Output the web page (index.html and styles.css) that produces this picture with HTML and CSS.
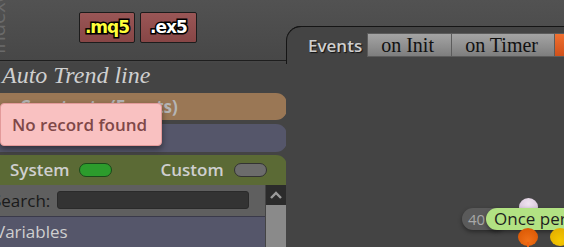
FILE: index.html
```html
<!DOCTYPE html>
<html>
<head>
<meta charset="utf-8">
<link rel="stylesheet" href="styles.css">
</head>
<body>
<div class="app">
  <div class="left">
    <div class="head">
      <div class="vtext">Indexes</div>
      <div class="btns">
        <div class="fbtn mq">.mq5</div>
        <div class="fbtn ex">.ex5</div>
      </div>
    </div>
    <div class="title">Auto Trend line</div>
    <div class="bar tan">Constants (Events)</div>
    <div class="bar slate"></div>
    <div class="bar green">
      <span class="lbl">System</span><span class="tog on"></span>
      <span class="lbl custom">Custom</span><span class="tog"></span>
    </div>
    <div class="lower">
      <div class="list">
        <div class="search"><span>Search:</span><div class="input"></div></div>
        <div class="row">Variables</div>
      </div>
      <div class="scroll">
        <div class="up"><svg width="12" height="8" viewBox="0 0 12 8"><path d="M1 7 L6 2 L11 7" fill="none" stroke="#9a9a9a" stroke-width="2.4"/></svg></div>
        <div class="track"></div>
      </div>
    </div>
    <div class="toast">No record found</div>
  </div>
  <div class="right">
    <div class="canvas">
      <div class="tabs">
        <span class="evlbl">Events</span>
        <span class="tab">on Init</span>
        <span class="tab">on Timer</span>
        <span class="tab orange">on Tick</span>
      </div>
      <div class="node">
        <span class="dot pink"></span>
        <span class="num">40</span>
        <span class="pill">Once per bar</span>
        <span class="dot orange"></span>
        <span class="stem"></span>
        <span class="dot yellow"></span>
      </div>
    </div>
  </div>
</div>
</body>
</html>
```
FILE: styles.css
```css
html, body { margin: 0; padding: 0; }
body { width: 564px; height: 247px; overflow: hidden; background: #444; font-family: "Open Sans", "DejaVu Sans", sans-serif; }
.app { display: flex; width: 564px; height: 247px; background: linear-gradient(#525252, #474747 62px, #444 63px); }
.left { width: 286px; flex: none; position: relative; display: flex; flex-direction: column; overflow: hidden; }
.head { height: 62px; border-bottom: 1px solid #1e1e1e; position: relative; display: flex; justify-content: flex-start; box-sizing: border-box; }
.vtext { position: absolute; left: -13px; top: -4px; width: 22px; height: 58px; overflow: hidden; }
.vtext { writing-mode: vertical-rl; transform: rotate(180deg); color: #6a6a6a; font-size: 20px; line-height: 22px; text-align: left; }
.btns { display: flex; gap: 5px; margin: 12px 0 0 79px; height: 31px; }
.fbtn { box-sizing: border-box; height: 31px; border: 1px solid #1c1c1c; border-radius: 2px; background: linear-gradient(#9a5656, #874646); font-family: "DejaVu Sans", sans-serif; font-weight: bold; font-size: 17px; line-height: 29px; text-align: center; letter-spacing: -1px; -webkit-text-stroke: 3px #000; paint-order: stroke fill; text-shadow: 0 0 1px #000; }
.mq { width: 56px; color: #ffff3a; }
.ex { width: 57px; color: #fff; }
.title { height: 31px; font-family: "Liberation Serif", serif; font-style: italic; font-size: 24px; line-height: 29px; color: #cfcfcf; padding-left: 2px; }
.bar { margin-right: -1px; border-radius: 0 11px 11px 0; box-sizing: border-box; }
.tan { height: 27px; margin-top: 1px; background: #9a7755; color: #b5b5b5; font-weight: bold; font-size: 17px; line-height: 27px; padding-left: 20px; }
.slate { height: 28px; margin-top: 4px; background: #55566a; }
.green { height: 30px; margin-top: 3px; background: #5b6a35; border-radius: 0 11px 0 0; display: flex; align-items: center; padding-left: 10px; color: #cfcfcf; font-weight: 600; font-size: 17px; }
.lbl { line-height: 30px; }
.custom { margin-left: 48px; }
.tog { width: 31px; height: 12px; border-radius: 7px; margin-left: 10px; margin-top: 1px; background: #6c6c6c; border: 1px solid #333; }
.tog.on { background: #2c9c2c; border-color: #1a4a1a; }
.lower { flex: 1; display: flex; }
.list { flex: 1; display: flex; flex-direction: column; background: #55566a; }
.search { height: 31px; background: #5f5f5f; border-bottom: 1px solid #3a3a4a; display: flex; align-items: center; margin-left: -8px; font-size: 17px; color: #1a1a1a; }
.search .input { width: 190px; height: 16px; margin-left: 7px; background: #333; border: 1px solid #2a2a2a; border-radius: 3px; }
.row { margin-left: -5px; color: #cfcfcf; font-size: 17px; line-height: 30px; }
.scroll { width: 20px; display: flex; flex-direction: column; margin-left: 1px; }
.up { height: 20px; background: #2b2b2b; display: flex; justify-content: center; align-items: center; }
.track { flex: 1; background: #8a8a8a; }
.toast { position: absolute; left: 0; top: 103px; width: 162px; height: 43px; box-sizing: border-box; background: #f9c1c1; border: 1px solid #e39a9a; border-radius: 4px; color: #7f4848; font-weight: 600; font-size: 17px; line-height: 41px; padding-left: 11px; white-space: nowrap; box-shadow: 0 3px 6px rgba(0,0,0,0.45); }
.right { flex: 1; display: flex; flex-direction: column; padding-top: 26px; }
.canvas { flex: 1; position: relative; background: #444; border-top: 1px solid #151515; border-top-left-radius: 15px; }
.canvas::before { content: ""; position: absolute; left: 0; top: -1px; width: 20px; height: 37px; border-left: 1px solid #151515; border-top: 1px solid #151515; border-top-left-radius: 15px; }
.tabs { display: flex; align-items: center; margin: 6px 0 0 22px; height: 24px; }
.evlbl { color: #cfcfcf; font-weight: 600; font-size: 17px; text-shadow: 1px 1px 1px #111; margin-right: 5px; width: 57px; }
.tab { box-sizing: border-box; height: 24px; border: 1px solid #5c5c5c; background: linear-gradient(#a4a4a4, #7e7e7e); font-family: "Liberation Serif", serif; font-size: 20px; line-height: 22px; color: #111; padding: 0 0 0 13px; flex: none; }
.tab + .tab { margin-left: -1px; }
.tab:nth-child(2) { width: 85px; }
.tab:nth-child(3) { width: 104px; }
.tab.orange { background: linear-gradient(#f07030, #d0501a); }
.node { position: absolute; left: 176px; top: 171px; }
.dot { position: absolute; width: 19px; height: 18px; border-radius: 50%; }
.dot.pink { left: 57px; top: 0; background: radial-gradient(circle at 50% 30%, #f0e4f0, #cdb8d0); }
.dot.orange { left: 56px; top: 30px; width: 20px; background: radial-gradient(circle at 50% 70%, #f07018, #d65400); }
.dot.yellow { left: 88px; top: 30px; width: 20px; background: radial-gradient(circle at 50% 70%, #f5c800, #e0a800); }
.stem { position: absolute; left: 65px; top: 44px; width: 2px; height: 10px; background: #f06010; }
.num { position: absolute; left: 0; top: 10px; width: 44px; height: 22px; border-radius: 11px; background: #5a5a5a; color: #a8a8a8; font-size: 15px; line-height: 22px; padding-left: 6px; box-sizing: border-box; box-shadow: 0 2px 4px rgba(0,0,0,0.4); }
.pill { position: absolute; left: 24px; top: 10px; height: 22px; border-radius: 11px; background: #b2e283; color: #1e1e1e; font-size: 17px; line-height: 22px; padding: 0 10px 0 8px; white-space: nowrap; box-shadow: 0 2px 4px rgba(0,0,0,0.4); }
```
